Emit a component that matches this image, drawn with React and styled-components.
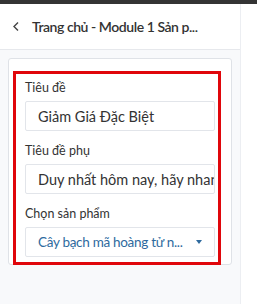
import React from "react";
import styled, { createGlobalStyle } from "styled-components";

const Global = createGlobalStyle`
  html, body { margin: 0; padding: 0; background: #fff; }
  body { font-family: Lato, "Noto Sans", sans-serif; color: #333; }
`;

const Page = styled.div`
  display: flex;
  flex-direction: column;
  height: 304px;
`;

const TopBar = styled.div`
  height: 4px;
  background: #343434;
`;

const Body = styled.div`
  display: flex;
  flex: 1;
`;

const Sidebar = styled.div`
  width: 240px;
  border-right: 1px solid #eceef2;
  background: #f8f9fb;
  display: flex;
  flex-direction: column;
`;

const Header = styled.div`
  height: 45px;
  background: #fff;
  border-bottom: 1px solid #e6e8ec;
  display: flex;
  align-items: center;
  padding-left: 11px;
  gap: 10px;
`;

const Back = styled.svg`
  width: 11px;
  height: 11px;
`;

const Title = styled.div`
  font-size: 14px;
  font-weight: 600;
  letter-spacing: -0.45px;
  color: #333;
`;

const Card = styled.div`
  margin: 8px 8px 0 8px;
  background: #fff;
  border: 1px solid #dfe2e7;
  border-radius: 3px;
  padding: 12px 10px 0 4px;
  width: 224px;
  box-sizing: border-box;
`;

const Highlight = styled.div`
  border: 3px solid #e0060b;
  padding: 6px 3px 5px 9px;
  display: flex;
  flex-direction: column;
  margin-bottom: -1px;
`;

const Label = styled.label`
  font-size: 12.5px;
  color: #333;
  line-height: 16px;
  margin-top: ${(p) => p.$gap || 0}px;
  margin-bottom: 5px;
`;

const Input = styled.input`
  height: 30px;
  box-sizing: border-box;
  border: 1px solid #e2e5ea;
  border-radius: 2px;
  padding: 0 0 0 12px;
  margin: 0;
  font-family: inherit;
  font-size: 14.5px;
  color: #333;
  background: #fff;
  outline: none;
`;

const Select = styled.div`
  height: 30px;
  box-sizing: border-box;
  border: 1px solid #e2e5ea;
  border-radius: 2px;
  display: flex;
  align-items: center;
  padding: 0 12px;
  font-size: 13.5px;
  letter-spacing: -0.3px;
  color: #2e6a9e;
  white-space: nowrap;
`;

const Value = styled.span`
  flex: 1;
  min-width: 0;
`;

const Caret = styled.span`
  flex: none;
  width: 0;
  height: 0;
  border-left: 3.5px solid transparent;
  border-right: 3.5px solid transparent;
  border-top: 4px solid #2e6a9e;
`;

export default function App() {
  return (
    <Page>
      <Global />
      <TopBar />
      <Body>
        <Sidebar>
          <Header>
            <Back viewBox="0 0 11 11">
              <path d="M7 1.5L3 5.5l4 4" stroke="#444" strokeWidth="1.4" fill="none" />
            </Back>
            <Title>Trang chủ - Module 1 Sản p...</Title>
          </Header>
          <Card>
            <Highlight>
              <Label>Tiêu đề</Label>
              <Input readOnly value="Giảm Giá Đặc Biệt" />
              <Label $gap={12}>Tiêu đề phụ</Label>
              <Input readOnly value="Duy nhất hôm nay, hãy nhanh tay" />
              <Label $gap={12}>Chọn sản phẩm</Label>
              <Select>
                <Value>Cây bạch mã hoàng tử n...</Value>
                <Caret />
              </Select>
            </Highlight>
          </Card>
        </Sidebar>
      </Body>
    </Page>
  );
}
